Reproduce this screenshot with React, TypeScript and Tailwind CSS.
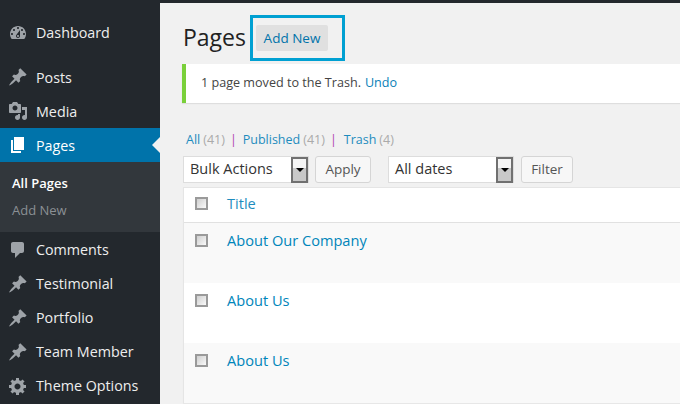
import type { ReactNode } from 'react'

// ─── Admin menu icons ─────────────────────────────────────────────────────────

const ICONS = {
  dashboard:
    'M3.76 16h12.48c1.1-1.37 1.76-3.11 1.76-5 0-4.42-3.58-8-8-8s-8 3.58-8 8c0 1.89.66 3.63 1.76 5zM10 4c.55 0 1 .45 1 1s-.45 1-1 1-1-.45-1-1 .45-1 1-1zM6 6c.55 0 1 .45 1 1s-.45 1-1 1-1-.45-1-1 .45-1 1-1zm8 0c.55 0 1 .45 1 1s-.45 1-1 1-1-.45-1-1 .45-1 1-1zm-5.37 5.55L12 7v6c0 1.1-.9 2-2 2s-2-.9-2-2c0-.57.24-1.08.63-1.45zM4 10c.55 0 1 .45 1 1s-.45 1-1 1-1-.45-1-1 .45-1 1-1zm12 0c.55 0 1 .45 1 1s-.45 1-1 1-1-.45-1-1 .45-1 1-1zm-5 3c0-.55-.45-1-1-1s-1 .45-1 1 .45 1 1 1 1-.45 1-1z',
  pin: 'M10.44 3.02l1.82-1.82 6.36 6.35-1.83 1.82c-1.05-.68-2.48-.57-3.41.36l-.75.75c-.92.93-1.04 2.35-.35 3.41l-1.83 1.82-2.41-2.41-2.8 2.79c-.42.42-3.38 2.71-3.8 2.29s1.86-3.39 2.28-3.81l2.79-2.79L4.1 9.36l1.83-1.82c1.05.69 2.48.57 3.4-.36l.75-.75c.93-.92 1.05-2.35.36-3.41z',
  media:
    'M13 11V4c0-.55-.45-1-1-1h-1.67L9 1H5L3.67 3H2c-.55 0-1 .45-1 1v7c0 .55.45 1 1 1h10c.55 0 1-.45 1-1zM7 4.5c1.38 0 2.5 1.12 2.5 2.5S8.38 9.5 7 9.5 4.5 8.38 4.5 7 5.62 4.5 7 4.5zM14 6h5v10.5c0 1.38-1.12 2.5-2.5 2.5S14 17.88 14 16.5s1.12-2.5 2.5-2.5c.17 0 .34.02.5.05V9h-3V6zm-4 8.05V13h2v3.5c0 1.38-1.12 2.5-2.5 2.5S7 17.88 7 16.5 8.12 14 9.5 14c.17 0 .34.02.5.05z',
  page: 'M6 15V2h10v13H6zm-1 1h8v2H3V5h2v11z',
  comment:
    'M5 2h9c1.1 0 2 .9 2 2v7c0 1.1-.9 2-2 2h-2l-5 5v-5H5c-1.1 0-2-.9-2-2V4c0-1.1.9-2 2-2z',
  gear: 'M18 12h-2.18c-.17.7-.44 1.35-.81 1.93l1.54 1.54-2.1 2.1-1.54-1.54c-.58.36-1.23.63-1.91.79V19H8v-2.18c-.68-.16-1.33-.43-1.91-.79l-1.54 1.54-2.12-2.12 1.54-1.54c-.36-.58-.63-1.23-.79-1.91H1V9.03h2.17c.16-.7.44-1.35.8-1.94L2.43 5.55l2.1-2.1 1.54 1.54c.58-.37 1.24-.64 1.93-.81V2h3v2.18c.68.16 1.33.43 1.91.79l1.54-1.54 2.12 2.12-1.54 1.54c.36.59.64 1.24.8 1.94H18V12zm-8.5 1.5c1.66 0 3-1.34 3-3s-1.34-3-3-3-3 1.34-3 3 1.34 3 3 3z',
}

type IconName = keyof typeof ICONS

function MenuItem({
  icon,
  label,
  active,
  low,
}: {
  icon: IconName
  label: string
  active?: boolean
  low?: boolean
}) {
  return (
    <div
      className={`relative flex h-[34px] shrink-0 items-center text-[14.3px] ${
        active ? 'bg-[#0073aa] text-white' : 'text-[#eeeeee]'
      }`}
    >
      <svg
        viewBox="0 0 20 20"
        className={`ml-[8px] h-[20px] w-[20px] shrink-0 ${active ? 'fill-white' : 'fill-[#9ea3a8]'}`}
      >
        <path d={ICONS[icon]} fillRule="evenodd" />
      </svg>
      <span className={low ? 'ml-[8px] mt-[2px]' : 'ml-[8px]'}>{label}</span>
      {active && (
        <span className="absolute right-0 top-[9px] h-0 w-0 border-y-[8px] border-r-[8px] border-y-transparent border-r-[#f1f1f1]" />
      )}
    </div>
  )
}

function Sidebar() {
  return (
    <aside className="flex w-[160px] shrink-0 flex-col bg-[#23282d] pt-[13px]">
      <MenuItem icon="dashboard" label="Dashboard" />
      <div className="h-[10px] shrink-0" />
      <MenuItem icon="pin" label="Posts" low />
      <MenuItem icon="media" label="Media" low />
      <MenuItem icon="page" label="Pages" active low />
      <div className="flex h-[70px] shrink-0 flex-col bg-[#32373c] pl-[12px] pt-[12px] text-[13px] leading-[18px]">
        <span className="font-semibold text-white">All Pages</span>
        <span className="mt-[9px] text-[#8b9095]">Add New</span>
      </div>
      <div className="h-[1px] shrink-0" />
      <MenuItem icon="comment" label="Comments" />
      <MenuItem icon="pin" label="Testimonial" />
      <MenuItem icon="pin" label="Portfolio" />
      <MenuItem icon="pin" label="Team Member" />
      <MenuItem icon="gear" label="Theme Options" />
    </aside>
  )
}

// ─── Form bits ────────────────────────────────────────────────────────────────

function FakeSelect({ label, width }: { label: string; width: string }) {
  return (
    <div
      className={`flex h-[27px] items-center justify-between border border-[#dddddd] bg-white pl-[6px] text-[14.5px] text-[#333333] ${width}`}
    >
      <span className="mb-[2px]">{label}</span>
      <span className="flex h-[26px] w-[17px] shrink-0 items-start justify-center border-2 border-[#707070] bg-gradient-to-b from-[#f4f4f4] from-40% to-[#c8c8c8] to-40% pt-[9px]">
        <span className="h-0 w-0 border-x-[4px] border-t-[4px] border-x-transparent border-t-black" />
      </span>
    </div>
  )
}

function GhostButton({ children, width }: { children: ReactNode; width: string }) {
  return (
    <div
      className={`flex h-[27px] items-center justify-center rounded-[3px] border border-[#d5d5d5] bg-[#f7f7f7] text-[13.5px] text-[#555555] ${width}`}
    >
      {children}
    </div>
  )
}

function CheckBox() {
  return (
    <span className="block h-[13px] w-[13px] shrink-0 border-2 border-[#9a9a9a] bg-gradient-to-br from-[#cfcfcf] to-[#fafafa]" />
  )
}

function TableRow({ title, striped }: { title: string; striped: boolean }) {
  return (
    <div
      className={`flex h-[60px] shrink-0 gap-[19px] pl-[11px] pt-[11px] ${striped ? 'bg-[#f9f9f9]' : 'bg-white'}`}
    >
      <CheckBox />
      <span className="-mt-[4px] text-[14.6px] leading-[20px] text-[#0085ba]">{title}</span>
    </div>
  )
}

// ─── Page ─────────────────────────────────────────────────────────────────────

export default function App() {
  return (
    <div className="flex h-[404px] w-[680px] flex-col overflow-hidden bg-[#f1f1f1] font-['Open_Sans',sans-serif]">
      <div className="h-[3px] shrink-0 bg-[#23282d]" />
      <div className="flex min-h-0 flex-1">
        <Sidebar />
        <main className="min-w-0 flex-1 pl-[22px]">
          <div className="relative flex h-[61px] items-start pt-[19px]">
            <h1 className="ml-[1px] text-[23px] leading-[30px] text-[#222222]">Pages</h1>
            <span className="ml-[10px] mt-[3px] flex h-[26px] w-[72px] items-center justify-center rounded-[2px] bg-[#e0e0e0] text-[13.5px] text-[#0073aa]">
              Add New
            </span>
            <span className="absolute left-[68px] top-[12px] h-[46px] w-[95px] border-[3px] border-[#00a0d2]" />
          </div>

          <div className="flex h-[39px] items-center border-l-4 border-[#7ad03a] bg-white pl-[15px] text-[12.6px] text-[#444444] shadow-[0_1px_1px_rgba(0,0,0,0.08)]">
            1 page moved to the Trash.
            <span className="ml-[4px] text-[#0a80b8]">Undo</span>
          </div>

          <div className="mt-[27px] flex h-[20px] items-center pl-[4px] text-[12.5px] text-[#aaaaaa]">
            <span className="text-[#1e8cbe]">All</span>
            <span className="ml-[3px]">(41)</span>
            <span className="ml-[5px] mr-[6px] text-[#b040b0]">|</span>
            <span className="text-[#1e8cbe]">Published</span>
            <span className="ml-[3px]">(41)</span>
            <span className="ml-[5px] mr-[7px] text-[#b040b0]">|</span>
            <span className="text-[#1e8cbe]">Trash</span>
            <span className="ml-[3px]">(4)</span>
          </div>

          <div className="mt-[6px] flex h-[28px] items-start pl-[1px]">
            <FakeSelect label="Bulk Actions" width="w-[126px]" />
            <div className="ml-[6px]">
              <GhostButton width="w-[56px]">Apply</GhostButton>
            </div>
            <div className="ml-[17px]">
              <FakeSelect label="All dates" width="w-[126px]" />
            </div>
            <div className="ml-[7px]">
              <GhostButton width="w-[52px]">Filter</GhostButton>
            </div>
          </div>

          <div className="ml-[1px] mt-[3px] flex flex-col border-t border-l border-[#e5e5e5] shadow-[0_1px_1px_rgba(0,0,0,0.04)]">
            <div className="flex h-[35px] shrink-0 items-start gap-[19px] border-b border-[#e1e1e1] bg-white pl-[11px] pt-[9px]">
              <CheckBox />
              <span className="-mt-[4px] text-[14.6px] leading-[20px] text-[#1e8cbe]">Title</span>
            </div>
            <TableRow title="About Our Company" striped />
            <TableRow title="About Us" striped={false} />
            <TableRow title="About Us" striped />
          </div>
        </main>
      </div>
    </div>
  )
}
